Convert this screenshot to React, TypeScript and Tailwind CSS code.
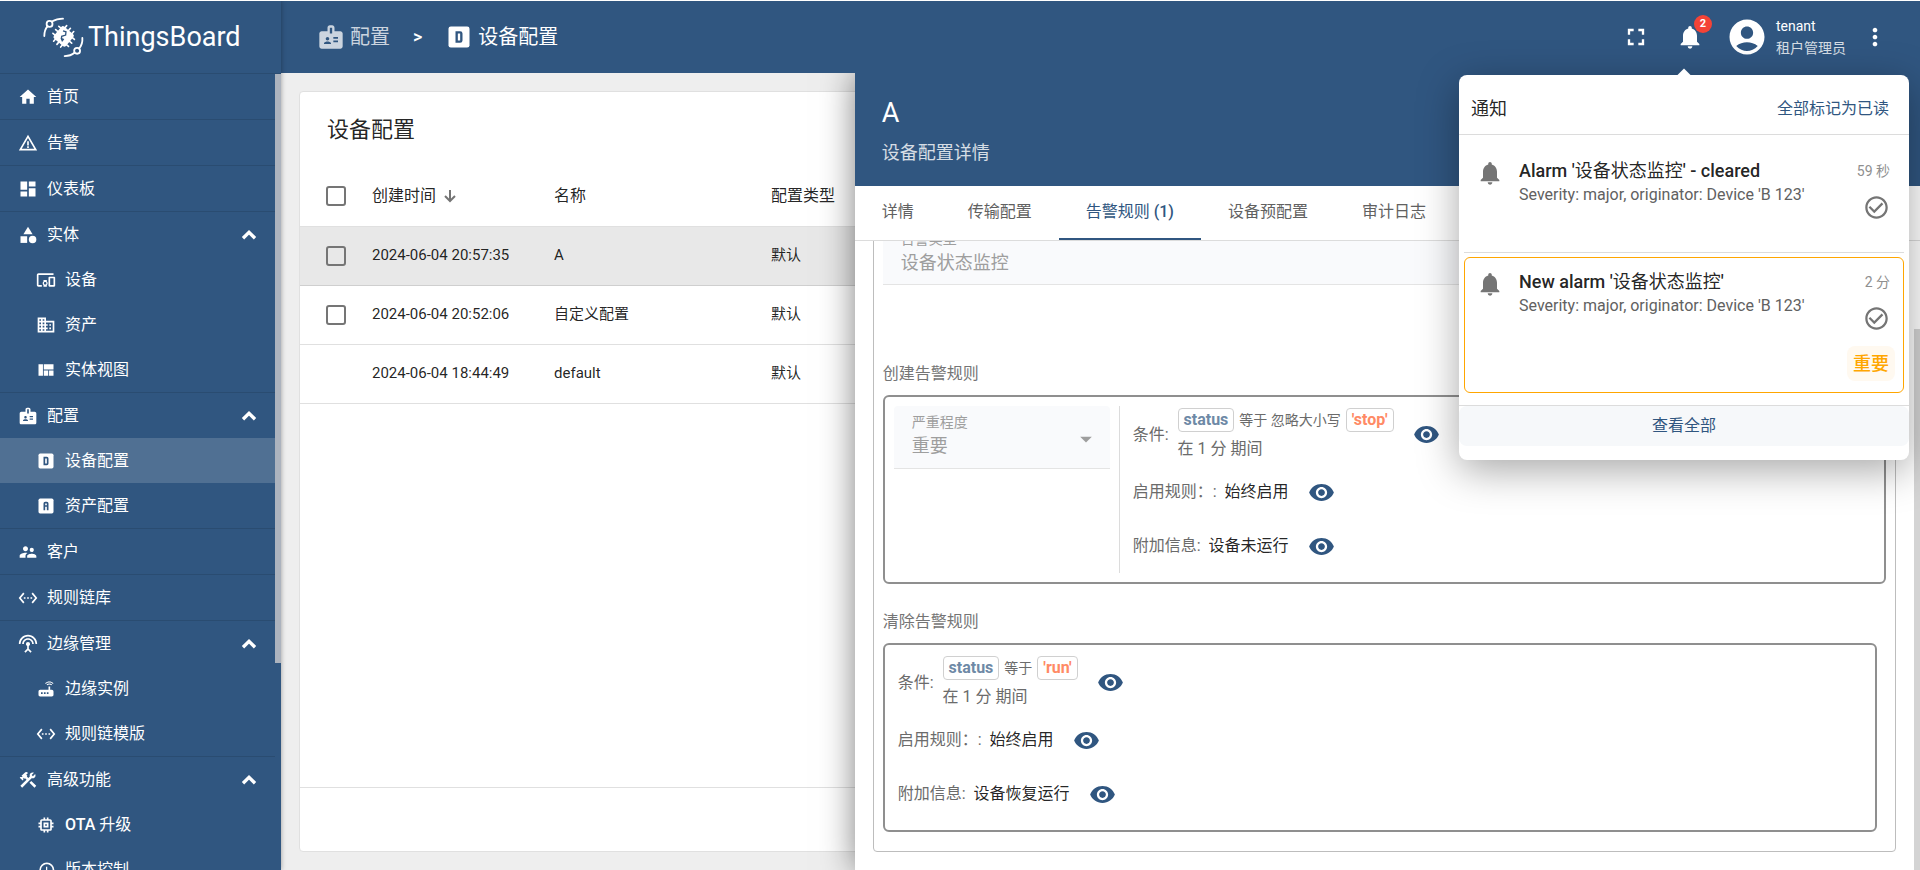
import type { ReactNode } from "react";
import type { IconType } from "react-icons";
import {
  MdAccountCircle,
  MdArrowDropDown,
  MdBadge,
  MdCategory,
  MdCheckCircleOutline,
  MdConstruction,
  MdDashboard,
  MdDevicesOther,
  MdDomain,
  MdFullscreen,
  MdHistory,
  MdHome,
  MdMemory,
  MdMoreVert,
  MdNotifications,
  MdRemoveRedEye,
  MdRouter,
  MdSettingsEthernet,
  MdSettingsInputAntenna,
  MdSupervisorAccount,
  MdViewQuilt,
  MdWarningAmber,
} from "react-icons/md";

type IconProps = { className?: string };

interface MenuItem {
  name: string;
  icon: IconType | ((props: IconProps) => ReactNode);
  active?: boolean;
  children?: MenuItem[];
}

function BoxIcon({ className, children }: IconProps & { children: ReactNode }) {
  return (
    <svg viewBox="0 0 24 24" className={className} aria-hidden="true">
      <rect x="3" y="3" width="18" height="18" rx="2" fill="currentColor" />
      <g fill="none" className="stroke-[#305680]" strokeWidth="2">
        {children}
      </g>
    </svg>
  );
}

function DeviceProfileIcon({ className }: IconProps) {
  return (
    <BoxIcon className={className}>
      <path d="M10 8h3a1 1 0 0 1 1 1v6a1 1 0 0 1-1 1h-3z" />
    </BoxIcon>
  );
}

function AssetProfileIcon({ className }: IconProps) {
  return (
    <BoxIcon className={className}>
      <path d="M10 17V9a1 1 0 0 1 1-1h2a1 1 0 0 1 1 1v8M10 12h4" />
    </BoxIcon>
  );
}

function ChevronUpIcon({ className }: IconProps) {
  return (
    <svg viewBox="0 0 16 10" className={className} aria-hidden="true">
      <path d="M2 8.2 8 2.4l6 5.8" fill="none" stroke="currentColor" strokeWidth="3.4" />
    </svg>
  );
}

function SortDownIcon({ className }: IconProps) {
  return (
    <svg viewBox="0 0 12 14" className={className} aria-hidden="true">
      <path d="M6 1v11M1 7l5 5 5-5" fill="none" stroke="currentColor" strokeWidth="2" />
    </svg>
  );
}

function LogoIcon({ className }: IconProps) {
  return (
    <svg viewBox="67 49 125 125" className={className} aria-hidden="true">
      <g fill="none" stroke="currentColor" strokeWidth="5.5" strokeLinecap="round">
        <circle cx="87" cy="70" r="9" />
        <path d="M71 107c0-13 4-23 10-30M94 63c10-6 21-9 34-9" />
        <circle cx="171" cy="152" r="9" />
        <path d="M187 113c1 13-3 24-10 32M163 158c-8 7-18 10-30 10" />
      </g>
      <g transform="rotate(40 130 108)">
        <rect x="106" y="84" width="48" height="48" rx="7" fill="currentColor" />
        <path
          d="M116 77v62M130 76v64M144 77v62M99 94h62M98 108h64M99 122h62"
          stroke="currentColor"
          strokeWidth="5"
          strokeLinecap="round"
        />
      </g>
      <path
        d="M128 91l9 3-1 10-12 4-1 7 7 2"
        fill="none"
        className="stroke-[#305680]"
        strokeWidth="4"
      />
      <path d="M121 115l11 2-7 8z" className="fill-[#305680]" />
    </svg>
  );
}

const menu: MenuItem[] = [
  { name: "首页", icon: MdHome },
  { name: "告警", icon: MdWarningAmber },
  { name: "仪表板", icon: MdDashboard },
  {
    name: "实体",
    icon: MdCategory,
    children: [
      { name: "设备", icon: MdDevicesOther },
      { name: "资产", icon: MdDomain },
      { name: "实体视图", icon: MdViewQuilt },
    ],
  },
  {
    name: "配置",
    icon: MdBadge,
    children: [
      { name: "设备配置", icon: DeviceProfileIcon, active: true },
      { name: "资产配置", icon: AssetProfileIcon },
    ],
  },
  { name: "客户", icon: MdSupervisorAccount },
  { name: "规则链库", icon: MdSettingsEthernet },
  {
    name: "边缘管理",
    icon: MdSettingsInputAntenna,
    children: [
      { name: "边缘实例", icon: MdRouter },
      { name: "规则链模版", icon: MdSettingsEthernet },
    ],
  },
  {
    name: "高级功能",
    icon: MdConstruction,
    children: [
      { name: "OTA 升级", icon: MdMemory },
      { name: "版本控制", icon: MdHistory },
    ],
  },
];

const profiles = [
  { time: "2024-06-04 20:57:35", name: "A", type: "默认", selectable: true, current: true },
  { time: "2024-06-04 20:52:06", name: "自定义配置", type: "默认", selectable: true },
  { time: "2024-06-04 18:44:49", name: "default", type: "默认" },
];

const tabs = ["详情", "传输配置", "告警规则 (1)", "设备预配置", "审计日志"];

// Chinese runs stay regular, only the latin part is emphasised
function MediumText({ text }: { text: string }) {
  return (
    <span className="font-medium">
      {text.split(/([\u4e00-\u9fff]+)/).map((part, index) =>
        index % 2 ? (
          <span key={index} className="font-normal">
            {part}
          </span>
        ) : (
          part
        ),
      )}
    </span>
  );
}

function MenuLink({ item, nested }: { item: MenuItem; nested?: boolean }) {
  const Icon = item.icon;

  return (
    <a
      href="#"
      className={`flex h-[45px] items-center gap-[9px] pr-[18px] ${nested ? "pl-9" : "pl-[18px]"} ${
        item.active ? "bg-[#507093]" : ""
      }`}
    >
      <Icon className="size-5 shrink-0" />
      <span className="flex-1">
        <MediumText text={item.name} />
      </span>
      {item.children && <ChevronUpIcon className="h-[10px] w-4" />}
    </a>
  );
}

function Sidebar() {
  return (
    <aside className="z-10 flex w-[281px] shrink-0 flex-col bg-[#305680] text-white shadow-[0_0_5px_rgba(0,0,0,0.35)]">
      <a href="#" className="flex h-[73px] shrink-0 items-center gap-1 border-b border-[#2a4c71] pl-[43px]">
        <LogoIcon className="size-[41px]" />
        <span className="text-[27px]">ThingsBoard</span>
      </a>
      <nav className="relative min-h-0 flex-1 overflow-hidden pr-[6px]">
        <ul>
          {menu.map((item) => (
            <li key={item.name} className="border-b border-[#2a4c71]">
              <MenuLink item={item} />
              {item.children && (
                <ul>
                  {item.children.map((child) => (
                    <li key={child.name}>
                      <MenuLink item={child} nested />
                    </li>
                  ))}
                </ul>
              )}
            </li>
          ))}
        </ul>
        <div className="absolute top-0 right-0 h-[74%] w-[6px] bg-[#acb3be]" />
      </nav>
    </aside>
  );
}

function Header() {
  return (
    <header className="flex h-[72px] shrink-0 items-center bg-[#305680] pr-[31px] pl-9 text-white">
      <nav className="flex flex-1 items-center text-xl" aria-label="breadcrumb">
        <a href="#" className="flex items-center gap-[5px] opacity-75">
          <MdBadge className="size-7" />
          配置
        </a>
        <span className="mx-[23px] text-lg font-medium">&gt;</span>
        <a href="#" className="flex items-center gap-[5px]">
          <DeviceProfileIcon className="size-7" />
          设备配置
        </a>
      </nav>
      <button type="button" aria-label="全屏" className="mr-[26px]">
        <MdFullscreen className="size-7" />
      </button>
      <button type="button" aria-label="通知" className="relative mr-[22px]">
        <MdNotifications className="size-7" />
        <span className="absolute -top-2 -right-2 flex size-[18px] items-center justify-center rounded-full bg-[#f44336] text-[11px] font-bold">
          2
        </span>
      </button>
      <MdAccountCircle className="mr-2 size-[42px]" />
      <div className="mr-[15px] text-sm leading-[22px]">
        <div>tenant</div>
        <div className="opacity-80">租户管理员</div>
      </div>
      <button type="button" aria-label="更多">
        <MdMoreVert className="size-7" />
      </button>
    </header>
  );
}

function Checkbox({ label }: { label: string }) {
  return (
    <input
      type="checkbox"
      aria-label={label}
      className="block size-5 appearance-none rounded-[3px] border-2 border-[#757575]"
    />
  );
}

function ProfileTable() {
  return (
    <section className="flex flex-1 flex-col rounded border border-[#e0e0e0] bg-white text-black/87">
      <h1 className="flex h-[74px] shrink-0 items-center pl-[27px] text-[22px]">设备配置</h1>
      <table className="w-full table-fixed text-left">
        <thead>
          <tr className="h-[60px] border-b border-[#e0e0e0] text-base">
            <th className="w-[72px] pl-[26px]">
              <Checkbox label="全选" />
            </th>
            <th className="w-[182px] font-normal">
              <button type="button" className="flex items-center gap-2">
                创建时间
                <SortDownIcon className="h-[14px] w-3 text-[#757575]" />
              </button>
            </th>
            <th className="w-[217px] font-normal">名称</th>
            <th className="font-normal">配置类型</th>
          </tr>
        </thead>
        <tbody className="text-[15px]">
          {profiles.map((profile) => (
            <tr
              key={profile.time}
              className={`h-[59px] border-b ${
                profile.current ? "border-[#cfcfcf] bg-[#e8e8e8]" : "border-[#e0e0e0]"
              }`}
            >
              <td className="pl-[26px]">{profile.selectable && <Checkbox label={profile.name} />}</td>
              <td>{profile.time}</td>
              <td>{profile.name}</td>
              <td>{profile.type}</td>
            </tr>
          ))}
        </tbody>
      </table>
      <div className="mt-auto h-16 border-t border-[#e0e0e0]" />
    </section>
  );
}

function ViewButton() {
  return (
    <button type="button" aria-label="查看" className="ml-[19px] text-[#305680]">
      <MdRemoveRedEye className="size-[27px]" />
    </button>
  );
}

interface RuleProps {
  operation: string;
  value: string;
  details: string;
}

function AlarmRule({ operation, value, details }: RuleProps) {
  return (
    <div className="pt-[2px] text-base text-[#6b6b6b]">
      <div className="mb-1 flex items-center">
        <span className="mr-[9px]">条件:</span>
        <div className="flex flex-col gap-[5px] leading-6">
          <div className="flex items-center gap-[5px] text-sm">
            <span className="flex h-6 items-center rounded border border-[#d0d0d0] px-[5px] text-base font-bold text-[#6e89a6]">
              status
            </span>
            {operation}
            <span className="flex h-6 items-center rounded border border-[#d0d0d0] px-[5px] text-base font-bold text-[#ff8a65]">
              {value}
            </span>
          </div>
          <span>在 1 分 期间</span>
        </div>
        <ViewButton />
      </div>
      <div className="flex h-[54px] items-center">
        <span className="mr-2">启用规则：:</span>
        <span className="text-black/87">始终启用</span>
        <ViewButton />
      </div>
      <div className="flex h-[54px] items-center">
        <span className="mr-2">附加信息:</span>
        <span className="text-black/87">{details}</span>
        <ViewButton />
      </div>
    </div>
  );
}

function ProfileDetails() {
  return (
    <section className="absolute inset-y-0 right-0 flex w-[65%] flex-col bg-white shadow-[0_0_32px_rgba(0,0,0,0.5)]">
      <header className="h-[113px] shrink-0 bg-[#305680] px-[27px] pt-6 text-white">
        <h2 className="text-[27px] leading-8">A</h2>
        <p className="mt-3 text-lg leading-6 opacity-80">设备配置详情</p>
      </header>
      <div role="tablist" className="flex h-[55px] shrink-0 border-b border-[#dcdcdc]">
        {tabs.map((tab, index) => (
          <button
            key={tab}
            type="button"
            role="tab"
            aria-selected={index === 2}
            className={`border-b-2 px-[27px] text-base ${
              index === 2 ? "border-[#305680] text-[#305680]" : "border-transparent text-[#616161]"
            }`}
          >
            <MediumText text={tab} />
          </button>
        ))}
      </div>
      <div className="relative flex min-h-0 flex-1 flex-col justify-end overflow-hidden pr-6 pb-[18px] pl-[18px]">
        <div className="rounded border border-[#bdbdbd] px-[9px] pb-[19px] text-[#757575]">
          <div className="flex h-[62px] flex-col border-b border-[#e4e4e4] bg-[#f9fafc] px-[18px] pt-1 text-[#9e9e9e]">
            <label htmlFor="alarm-type" className="text-sm leading-6">
              告警类型
            </label>
            <input
              id="alarm-type"
              type="text"
              defaultValue="设备状态监控"
              disabled
              className="h-6 w-full bg-transparent text-lg"
            />
          </div>

          <h3 className="mt-[77px] mb-[9px] text-base">创建告警规则</h3>
          <div className="flex rounded-md border-2 border-[#8f8f8f] p-[9px]">
            <div className="relative flex h-[63px] w-[216px] shrink-0 flex-col rounded-t border-b border-[#e4e4e4] bg-[#f9fafc] px-[18px] pt-1 text-[#9e9e9e]">
              <label htmlFor="severity" className="text-sm leading-6">
                严重程度
              </label>
              <select id="severity" disabled className="h-6 appearance-none bg-transparent text-lg leading-6 opacity-100">
                <option>重要</option>
              </select>
              <MdArrowDropDown className="absolute top-[19px] right-[10px] size-7" />
            </div>
            <div className="ml-[9px] border-l border-[#dcdcdc] pl-[13px]">
              <AlarmRule operation="等于 忽略大小写" value="'stop'" details="设备未运行" />
            </div>
          </div>

          <h3 className="mt-[26px] mb-[9px] text-base">清除告警规则</h3>
          <div className="mr-[9px] rounded-md border-2 border-[#8f8f8f] py-[9px] pl-[13px]">
            <AlarmRule operation="等于" value="'run'" details="设备恢复运行" />
          </div>
        </div>
        <div className="absolute right-0 bottom-0 h-[86%] w-[6px] bg-[#d4d4d4]" />
      </div>
    </section>
  );
}

interface NotificationProps {
  title: string;
  time: string;
  severity?: string;
}

function Notification({ title, time, severity }: NotificationProps) {
  return (
    <article
      className={`flex ${
        severity
          ? "mt-1 h-[136px] rounded-md border border-[#ffa600] pt-3 pr-2 pl-[11px]"
          : "h-[118px] border-b border-[#dcdcdc] pt-6 pr-[9px] pl-3"
      }`}
    >
      <MdNotifications className="mr-[15px] size-7 shrink-0 text-[#757575]" />
      <div className="flex-1">
        <h4 className="text-lg leading-6 text-black/87">
          <MediumText text={title} />
        </h4>
        <p className="text-base text-[#616161]">Severity: major, originator: Device 'B 123'</p>
      </div>
      <div className="flex flex-col items-end">
        <time className="pr-[5px] text-sm leading-6 text-[#8f8f8f]">{time}</time>
        <button type="button" aria-label="标记为已读" className="mt-[11px] mr-[5px] text-[#757575]">
          <MdCheckCircleOutline className="size-[27px]" />
        </button>
        {severity && (
          <span className="mt-[14px] flex h-[35px] w-12 items-center justify-center rounded-lg bg-[#fff9f0] text-lg font-medium text-[#ffa600]">
            {severity}
          </span>
        )}
      </div>
    </article>
  );
}

function NotificationPopover() {
  return (
    <div className="absolute top-[74px] right-[11px] z-20 w-[450px] rounded-lg bg-white pb-[14px] shadow-[0_10px_40px_rgba(0,0,0,0.35)]">
      <div className="absolute -top-1 left-[219px] size-3 rotate-45 bg-white" />
      <div className="relative flex h-[60px] items-center justify-between border-b border-[#dcdcdc] pt-2 pr-5 pl-3">
        <h3 className="text-lg text-black/87">通知</h3>
        <button type="button" className="text-base text-[#305680]">
          全部标记为已读
        </button>
      </div>
      <div className="px-[5px] pb-3">
        <Notification title="Alarm '设备状态监控' - cleared" time="59 秒" />
        <Notification title="New alarm '设备状态监控'" time="2 分" severity="重要" />
      </div>
      <div className="border-t border-[#dcdcdc]">
        <button type="button" className="h-10 w-full rounded-lg bg-[#f6f8fa] text-base text-[#305680]">
          查看全部
        </button>
      </div>
    </div>
  );
}

export default function App() {
  return (
    <div className="relative flex h-screen overflow-hidden border-t border-white bg-[#eee] font-[Roboto,'Noto_Sans_CJK_SC',sans-serif]">
      <Sidebar />
      <div className="flex min-w-0 flex-1 flex-col">
        <Header />
        <main className="relative flex min-h-0 flex-1 overflow-hidden p-[18px]">
          <ProfileTable />
          <ProfileDetails />
        </main>
      </div>
      <NotificationPopover />
    </div>
  );
}
